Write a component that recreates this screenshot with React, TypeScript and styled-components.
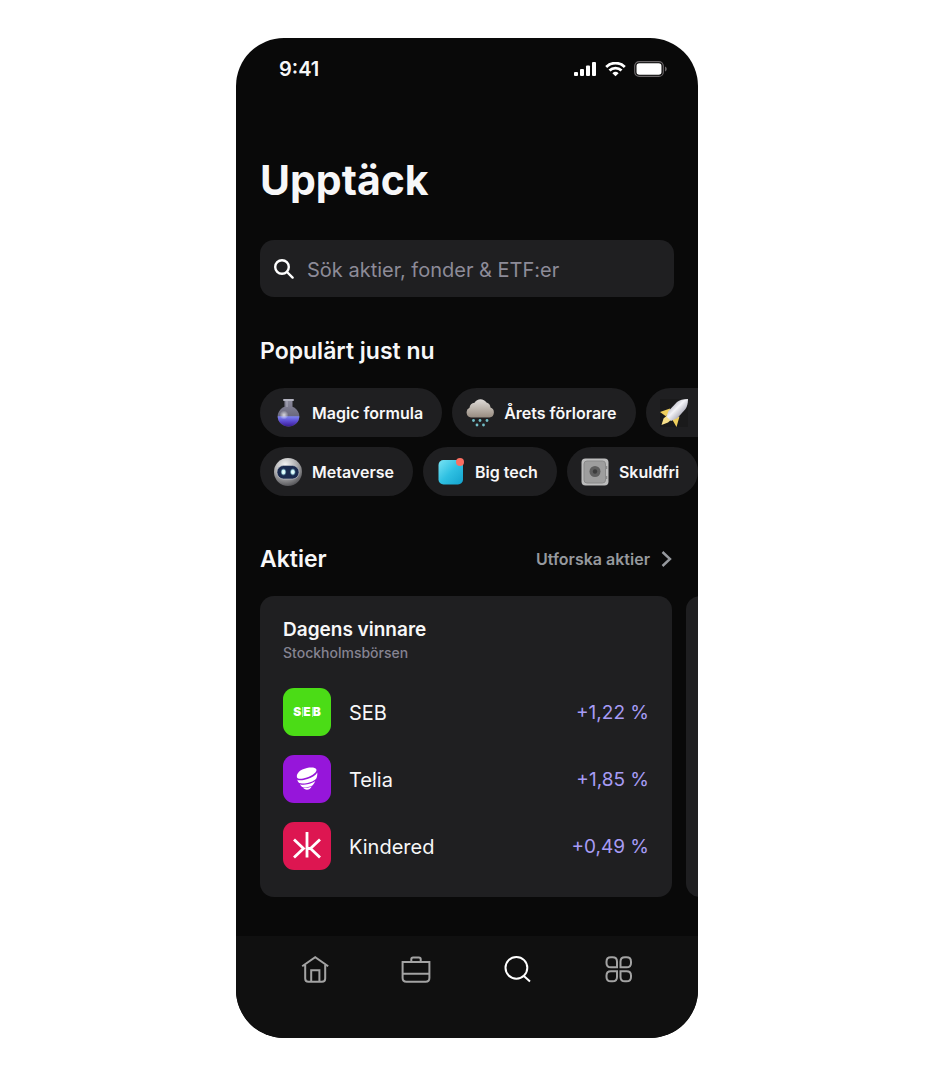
import React from "react";
import styled, { createGlobalStyle } from "styled-components";

const GlobalStyle = createGlobalStyle`
  *, *::before, *::after { box-sizing: border-box; }
  body {
    margin: 0;
    background: #ffffff;
    font-family: Inter, "Liberation Sans", sans-serif;
    color: #f7f7f8;
  }
  h1, h2, h3, p, ul { margin: 0; padding: 0; }
  ul { list-style: none; }
  svg { display: block; flex: none; }
`;

const Page = styled.div`
  display: flex;
  justify-content: center;
  padding: 38px 16px;
`;

const Phone = styled.div`
  display: flex;
  flex-direction: column;
  width: 100%;
  max-width: 462px;
  overflow: hidden;
  border-radius: 48px;
  background: #090909;
`;

const StatusBar = styled.header`
  display: flex;
  align-items: center;
  justify-content: space-between;
  padding: 18px 31px 0 43px;
  line-height: 26px;
`;

const Clock = styled.time`
  font-size: 20px;
  font-weight: 600;
`;

const StatusIcons = styled.div`
  display: flex;
  align-items: center;
  gap: 8px;
`;

const Content = styled.main`
  display: flex;
  flex-direction: column;
  padding: 72px 0 39px 24px;
`;

const Title = styled.h1`
  font-size: 41px;
  line-height: 52px;
  font-weight: 700;
`;

const SearchField = styled.label`
  display: flex;
  align-items: center;
  gap: 13px;
  height: 57px;
  margin: 34px 24px 0 0;
  padding: 0 14px;
  border-radius: 14px;
  background: #1f1f21;
`;

const SearchInput = styled.input`
  flex: 1;
  min-width: 0;
  padding: 2px 0 0;
  border: 0;
  outline: 0;
  background: transparent;
  color: #f7f7f8;
  font: 400 20px/28px Inter, "Liberation Sans", sans-serif;
  &::placeholder { color: #8d8b98; opacity: 1; }
`;

const SectionTitle = styled.h2`
  font-size: 23px;
  line-height: 30px;
  font-weight: 600;
`;

const Popular = styled.section`
  margin-top: 39px;
`;

const Chips = styled.div`
  display: flex;
  flex-direction: column;
  gap: 10px;
  margin-top: 22px;
`;

const ChipRow = styled.div`
  display: flex;
  gap: 10px;
  overflow: hidden;
`;

const Chip = styled.button`
  display: flex;
  flex: none;
  align-items: center;
  gap: 10px;
  min-width: 120px;
  height: 49px;
  padding: 0 19px 0 14px;
  border: 0;
  border-radius: 25px;
  background: #1f1f21;
  color: #f7f7f8;
  font: 600 16px/24px Inter, "Liberation Sans", sans-serif;
  white-space: nowrap;
`;

const SectionHead = styled.div`
  display: flex;
  align-items: center;
  justify-content: space-between;
  margin-top: 48px;
  padding-right: 26px;
`;

const ExploreLink = styled.a`
  display: flex;
  align-items: center;
  gap: 11px;
  color: #96999e;
  font-size: 16px;
  line-height: 24px;
  font-weight: 600;
  text-decoration: none;
`;

const Carousel = styled.div`
  display: flex;
  gap: 14px;
  margin-top: 22px;
  overflow: hidden;
`;

const Card = styled.article`
  flex: 0 0 calc(100% - 26px);
  padding: 22px 23px 27px;
  border-radius: 14px;
  background: #1f1f21;
`;

const CardTitle = styled.h3`
  font-size: 19px;
  line-height: 24px;
  font-weight: 600;
`;

const CardNote = styled.p`
  color: #858391;
  font-size: 14px;
  line-height: 22px;
  font-weight: 500;
`;

const StockList = styled.ul`
  display: flex;
  flex-direction: column;
  gap: 19px;
  margin-top: 24px;
`;

const Stock = styled.li`
  display: flex;
  align-items: center;
  line-height: 28px;
`;

const Logo = styled.span<{ $color: string }>`
  display: flex;
  align-items: center;
  justify-content: center;
  width: 48px;
  height: 48px;
  margin-right: 18px;
  border-radius: 11px;
  background: ${(p) => p.$color};
`;

const SebMark = styled.span`
  display: flex;
  font-size: 12px;
  line-height: 10px;
  font-weight: 900;
  color: #ffffff;
  span + span { border-left: 1px solid #a5f080; margin-left: 1px; }
`;

const StockName = styled.span`
  padding-top: 2px;
  font-size: 20px;
`;

const Change = styled.span`
  margin-left: auto;
  padding-top: 2px;
  font-size: 19px;
  color: #a79cf5;
`;

const TabBar = styled.nav`
  display: grid;
  grid-template-columns: repeat(4, 1fr);
  padding: 18px 28px 52px;
  background: #101010;
`;

const Tab = styled.button<{ $active?: boolean }>`
  display: flex;
  justify-content: center;
  padding: 0;
  border: 0;
  background: transparent;
  color: ${(p) => (p.$active ? "#ffffff" : "#a3a3a3")};
`;

const Flask = () => (
  <svg width="28" height="28" viewBox="0 0 28 28" aria-hidden="true">
    <defs>
      <linearGradient id="flaskGlass" x1="0" y1="0" x2="0" y2="1">
        <stop offset="0" stopColor="#8b8a9c" /><stop offset="1" stopColor="#55536a" />
      </linearGradient>
      <linearGradient id="flaskLiquid" x1="0" y1="0" x2="0" y2="1">
        <stop offset="0" stopColor="#7f88f2" /><stop offset=".5" stopColor="#5b49d0" /><stop offset="1" stopColor="#391c93" />
      </linearGradient>
      <radialGradient id="flaskShine">
        <stop offset="0" stopColor="#ffffff" stopOpacity=".75" /><stop offset="1" stopColor="#ffffff" stopOpacity="0" />
      </radialGradient>
    </defs>
    <path d="M10.500 1h8v6.800a10.800 10.300 0 1 1-8 0z" fill="url(#flaskGlass)" />
    <path d="M3.700 17.200h21.600a10.800 10.300 0 0 1-21.600 0z" fill="url(#flaskLiquid)" />
    <rect x="9" y="0" width="11" height="2" rx="1" fill="#b5b5c2" />
    <rect x="12" y="2" width="2" height="6" fill="#b0afbf" opacity=".5" />
    <circle cx="10" cy="16" r="4.500" fill="url(#flaskShine)" />
  </svg>
);

const RainCloud = () => (
  <svg width="28" height="28" viewBox="0 0 28 28" aria-hidden="true">
    <defs>
      <linearGradient id="cloud" x1="0" y1="0" x2="0" y2="1">
        <stop offset="0" stopColor="#dfdbd8" /><stop offset=".5" stopColor="#bcb4ac" /><stop offset="1" stopColor="#978b80" />
      </linearGradient>
    </defs>
    <path d="M5 18.500A5.200 5.200 0 0 1 3.500 8.700 5.800 5.800 0 0 1 8.500 3.700 7 7 0 0 1 20.500 3.600 5.600 5.600 0 0 1 24.500 8.500 5.200 5.200 0 0 1 23.500 18.500z" fill="url(#cloud)" />
    <g fill="#72bdc6">
      <circle cx="7.500" cy="21.500" r="1.400" /><circle cx="14" cy="21.500" r="1.400" /><circle cx="21" cy="21.500" r="1.400" />
      <circle cx="11" cy="26" r="1.400" /><circle cx="17.500" cy="26" r="1.400" />
    </g>
  </svg>
);

const Rocket = () => (
  <svg width="28" height="28" viewBox="0 0 28 28" aria-hidden="true">
    <defs>
      <linearGradient id="rocket" x1=".25" y1=".25" x2=".75" y2=".75">
        <stop offset="0" stopColor="#b9b9c6" /><stop offset=".4" stopColor="#f4f4f8" /><stop offset="1" stopColor="#a5a5b3" />
      </linearGradient>
    </defs>
    <rect width="28" height="28" fill="#1a1a1b" />
    <path d="M10 9.500 0 13l5.500 4 4-1zM19.500 17.500 16.500 28 12.500 21l1-2.500z" fill="#f0cf5c" />
    <path d="M7 16.500 3.500 19.500 1.500 26l6.500-2.500 4-3.500z" fill="#f8e08a" />
    <path d="M28 0C23 .2 19.500 1 17 3L8.500 12 6.500 17.500l4.500 4.500 6.500-3 8-9c1.700-2.500 2.500-6 2.500-10z" fill="url(#rocket)" />
  </svg>
);

const Robot = () => (
  <svg width="28" height="28" viewBox="0 0 28 28" aria-hidden="true">
    <defs>
      <radialGradient id="robot" cx=".4" cy=".25" r=".8">
        <stop offset="0" stopColor="#f5f5f5" /><stop offset=".55" stopColor="#a8a8aa" /><stop offset="1" stopColor="#4c4c50" />
      </radialGradient>
      <radialGradient id="robotEye">
        <stop offset="0" stopColor="#ffffff" /><stop offset=".5" stopColor="#c6f3f5" /><stop offset="1" stopColor="#3b6f90" stopOpacity="0" />
      </radialGradient>
    </defs>
    <circle cx="14" cy="14" r="14" fill="url(#robot)" />
    <rect x="3" y="7.500" width="22" height="13.500" rx="6.500" fill="#1a2a4e" stroke="#c4c8cd" strokeWidth=".6" />
    <ellipse cx="9.500" cy="14" rx="3.200" ry="4" fill="url(#robotEye)" />
    <ellipse cx="18.800" cy="14" rx="3.200" ry="4" fill="url(#robotEye)" />
  </svg>
);

const AppBadge = () => (
  <svg width="28" height="28" viewBox="0 0 28 28" aria-hidden="true">
    <defs>
      <linearGradient id="app" x1="0" y1="0" x2="1" y2="1">
        <stop offset="0" stopColor="#79e4f4" /><stop offset=".5" stopColor="#2fc0e2" /><stop offset="1" stopColor="#12a2cd" />
      </linearGradient>
    </defs>
    <rect x="1.500" y="2" width="24.500" height="24.500" rx="5" fill="url(#app)" />
    <circle cx="23" cy="4" r="4" fill="#fa6e61" />
  </svg>
);

const Safe = () => (
  <svg width="28" height="28" viewBox="0 0 28 28" aria-hidden="true">
    <rect x=".5" y=".5" width="27" height="27" rx="4" fill="#bdbdbd" />
    <rect x="3" y="3" width="21.500" height="22" rx="3" fill="#9e9e9e" stroke="#8a8a8a" />
    <path d="M25.500 8v3M25.500 18v3" stroke="#8a8a8a" strokeWidth="1.500" />
    <circle cx="14" cy="13.500" r="5.500" fill="#5f5f5f" />
    <circle cx="14" cy="13.500" r="2.200" fill="#3c3c3c" />
  </svg>
);

const chipRows = [
  [
    { label: "Magic formula", Icon: Flask },
    { label: "Årets förlorare", Icon: RainCloud },
    { label: "Raketer", Icon: Rocket, iconOnly: true },
  ],
  [
    { label: "Metaverse", Icon: Robot },
    { label: "Big tech", Icon: AppBadge },
    { label: "Skuldfri", Icon: Safe },
  ],
];

const Seb = () => (
  <SebMark aria-hidden="true"><span>S</span><span>E</span><span>B</span></SebMark>
);

const TeliaMark = () => (
  <svg width="48" height="48" viewBox="0 0 48 48" fill="#ffffff" aria-hidden="true">
    <path d="M14 22.500c-1-4 3-8 10-9.500 5-1 8.500-.2 9.300 1.200 1.200 2.600-3.500 6.300-9.500 8.300-5 1.600-9 1.700-9.800 0z" />
    <path d="M14.200 24.400c1.600 1.400 5.500 1.200 10.300-.4 4.600-1.500 8.400-4 9.800-6.600.2 2.600-.3 4.800-1.300 6.500-2 1.900-5 3.300-8.400 4-3.300.7-6.500 1-8.500.2-.9-1-1.600-2.400-1.900-3.700z" />
    <path d="M17 29.300c2 .9 5.400.6 8.600-.2 2.500-.6 4.900-1.700 6.700-3-.6 1.600-1.500 3-2.600 4.200-3 1.900-7.800 2.600-10.600 1.700-.9-.8-1.600-1.800-2.100-2.700z" />
    <path d="M20 32.500c2.500.6 6 .2 8.800-1.100-1.300 2-2.500 3.300-4.800 3.300-1.800 0-3-.9-4-2.200z" />
  </svg>
);

const KinderedMark = () => (
  <svg width="48" height="48" viewBox="0 0 48 48" fill="none" stroke="#ffffff" strokeWidth="2.800" aria-hidden="true">
    <path d="M24 10v25.500M37 17.500 27.500 26.500 37 35.500M11 17.500l9.500 9L11 35.500M24 26.500h4" />
  </svg>
);

const stocks = [
  { name: "SEB", change: "+1,22 %", color: "#4bdc16", Mark: Seb },
  { name: "Telia", change: "+1,85 %", color: "#9616da", Mark: TeliaMark },
  { name: "Kindered", change: "+0,49 %", color: "#dd1651", Mark: KinderedMark },
];

const Signal = () => (
  <svg width="23" height="15" viewBox="0 0 23 15" fill="#ffffff" aria-hidden="true">
    <rect x="0" y="10" width="4" height="4" rx="1" /><rect x="6" y="7" width="4" height="7" rx="1" />
    <rect x="12" y="3.500" width="4" height="10.500" rx="1" /><rect x="18" y="0" width="4" height="14" rx="1" />
  </svg>
);

const Wifi = () => (
  <svg width="21" height="15" viewBox="0 0 21 15" fill="none" stroke="#ffffff" strokeWidth="2.800" aria-hidden="true">
    <path d="M1.200 4.900a13.400 13.400 0 0 1 18.600 0M4.500 8.500a8.600 8.600 0 0 1 12 0" />
    <path d="M10.500 14.300 7.400 11.200a4.600 4.600 0 0 1 6.200 0z" fill="#ffffff" stroke="none" />
  </svg>
);

const Battery = () => (
  <svg width="33" height="17" viewBox="0 0 33 17" aria-hidden="true">
    <rect x=".7" y=".6" width="28.600" height="14.800" rx="4.500" fill="none" stroke="#6b6769" strokeWidth="1.200" />
    <rect x="2.500" y="2.200" width="25" height="11.600" rx="2.800" fill="#ffffff" />
    <path d="M31 5.500v5c1.300-.5 1.700-1.500 1.700-2.500S32.300 6 31 5.500z" fill="#6b6769" />
  </svg>
);

const tabIcons = [
  { label: "Hem", d: "M1.200 11.200 14.200 2.200 27.200 11.200M4.200 10v13.500q0 3.300 3.300 3.300h13.400q3.300 0 3.300-3.300V10M10.200 26.800V15.200h8.200v11.600" },
  { label: "Portfölj", d: "M.6 7h26.800v16q0 3.800-3.800 3.800H4.400Q.6 26.800.6 23zM.6 18.800h26.800M9.300 7V4.200q0-1.800 1.800-1.800h5.800q1.800 0 1.800 1.800V7" },
  { label: "Sök", d: "M23.300 12.800a10.900 10.900 0 1 1-21.800 0 10.900 10.900 0 0 1 21.800 0zM19.600 20.800l6.400 5.800" },
  { label: "Mer", d: "M12 12.300H5.900Q1.500 12.300 1.500 7.900V6.700Q1.500 2.300 5.900 2.300H7.600Q12 2.300 12 6.700zM15.500 12.300V6.700Q15.500 2.300 19.900 2.300H21.600Q26 2.300 26 6.700V7.900Q26 12.300 21.600 12.300zM12 16.200H5.900Q1.500 16.200 1.500 20.600V21.900Q1.500 26.300 5.900 26.300H7.600Q12 26.300 12 21.900zM15.500 16.200V21.900Q15.500 26.300 19.900 26.300H21.600Q26 26.300 26 21.900V20.600Q26 16.200 21.600 16.200z" },
];

export default function App() {
  return (
    <>
      <GlobalStyle />
      <Page>
        <Phone>
          <StatusBar>
            <Clock>9:41</Clock>
            <StatusIcons><Signal /><Wifi /><Battery /></StatusIcons>
          </StatusBar>
          <Content>
            <Title>Upptäck</Title>
            <SearchField>
              <svg width="20" height="20" viewBox="0 0 20 20" fill="none" stroke="#ffffff" strokeWidth="2.400" strokeLinecap="round" aria-hidden="true">
                <circle cx="8" cy="8" r="6.800" /><path d="m13 13 5.600 5.600" />
              </svg>
              <SearchInput type="search" aria-label="Sök" placeholder="Sök aktier, fonder &amp; ETF:er" />
            </SearchField>
            <Popular>
              <SectionTitle>Populärt just nu</SectionTitle>
              <Chips>
                {chipRows.map((row, i) => (
                  <ChipRow key={i}>
                    {row.map(({ label, Icon, iconOnly }: { label: string; Icon: React.FC; iconOnly?: boolean }) => (
                      <Chip key={label} type="button" aria-label={label}>
                        <Icon />
                        {iconOnly ? null : label}
                      </Chip>
                    ))}
                  </ChipRow>
                ))}
              </Chips>
            </Popular>
            <section>
              <SectionHead>
                <SectionTitle>Aktier</SectionTitle>
                <ExploreLink href="#aktier">
                  Utforska aktier
                  <svg width="11" height="16" viewBox="0 0 11 16" fill="none" stroke="currentColor" strokeWidth="2.400" aria-hidden="true">
                    <path d="m1.500 1 7.500 7-7.500 7" />
                  </svg>
                </ExploreLink>
              </SectionHead>
              <Carousel>
                <Card>
                  <CardTitle>Dagens vinnare</CardTitle>
                  <CardNote>Stockholmsbörsen</CardNote>
                  <StockList>
                    {stocks.map(({ name, change, color, Mark }) => (
                      <Stock key={name}>
                        <Logo $color={color}><Mark /></Logo>
                        <StockName>{name}</StockName>
                        <Change>{change}</Change>
                      </Stock>
                    ))}
                  </StockList>
                </Card>
                <Card aria-hidden="true" />
              </Carousel>
            </section>
          </Content>
          <TabBar>
            {tabIcons.map(({ label, d }) => (
              <Tab key={label} type="button" aria-label={label} $active={label === "Sök"}>
                <svg width="32" height="32" viewBox="-2 -1 32 32" fill="none" stroke="currentColor" strokeWidth="2">
                  <path d={d} />
                </svg>
              </Tab>
            ))}
          </TabBar>
        </Phone>
      </Page>
    </>
  );
}
